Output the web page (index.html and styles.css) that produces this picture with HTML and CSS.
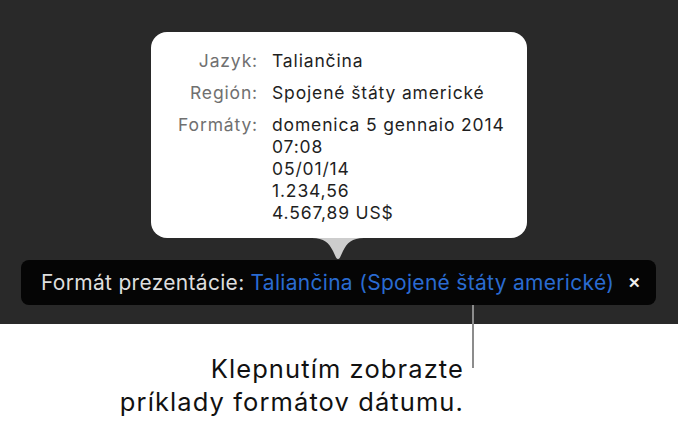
FILE: index.html
```html
<!DOCTYPE html>
<html lang="sk">
<head>
<meta charset="utf-8">
<link rel="stylesheet" href="styles.css">
</head>
<body>
<div class="stage">
  <div class="popover">
    <div class="rows">
      <div class="label">Jazyk:</div>
      <div class="value">Taliančina</div>
      <div class="label">Región:</div>
      <div class="value">Spojené štáty americké</div>
      <div class="label">Formáty:</div>
      <div class="value">domenica 5 gennaio 2014<br>07:08<br>05/01/14<br>1.234,56<br>4.567,89 US$</div>
    </div>
  </div>
  <svg class="arrow" width="52" height="22" viewBox="0 0 52 22"><path d="M0 0 C12 0 17 5 21 13 L24 19.5 Q26 22.5 28 19.5 L31 13 C35 5 40 0 52 0 Z" fill="#cdcdcd"/></svg>
  <div class="bar">
    <span class="bar-label">Formát prezentácie:</span>
    <span class="bar-link">Taliančina (Spojené štáty americké)</span>
    <span class="bar-close">✕</span>
  </div>
</div>
<div class="callout-line"></div>
<div class="caption">Klepnutím zobrazte<br>príklady formátov dátumu.</div>
</body>
</html>
```
FILE: styles.css
```css
html, body {
  margin: 0;
  padding: 0;
  background: #ffffff;
  font-family: Inter, "Liberation Sans", sans-serif;
}
body {
  position: relative;
  width: 678px;
  height: 423px;
  overflow: hidden;
}
.stage {
  height: 324px;
  background: #292929;
  display: flex;
  flex-direction: column;
  align-items: center;
}
.popover {
  margin-top: 32px;
  width: 376px;
  height: 206px;
  box-sizing: border-box;
  background: #ffffff;
  border-radius: 16px;
  padding-top: 18px;
}
.rows {
  display: grid;
  grid-template-columns: 106px 1fr;
  column-gap: 15px;
  row-gap: 10px;
  font-size: 17.5px;
  letter-spacing: 0.85px;
  line-height: 22px;
}
.label {
  text-align: right;
  color: #707070;
  margin-right: -1px;
}
.value {
  color: #1f1f1f;
}
.arrow {
  display: block;
  margin-left: -2px;
}
.bar {
  width: 635px;
  height: 45px;
  box-sizing: border-box;
  margin-left: -1px;
  background: #050505;
  border-radius: 8px;
  display: flex;
  align-items: center;
  padding-left: 20px;
  font-size: 21px;
  letter-spacing: 0.3px;
  white-space: nowrap;
}
.bar-label {
  color: #dedede;
}
.bar-link {
  color: #2a6bd1;
  margin-left: 6px;
}
.bar-close {
  color: #f0f0f0;
  font-size: 15px;
  font-weight: bold;
  margin-left: 14px;
}
.callout-line {
  position: absolute;
  left: 472px;
  top: 305px;
  width: 2px;
  height: 63px;
  background: #8c8c8c;
}
.caption {
  margin-top: 28px;
  padding-right: 214px;
  text-align: right;
  font-size: 25.5px;
  letter-spacing: 1.1px;
  line-height: 33px;
  color: #111111;
}
```
